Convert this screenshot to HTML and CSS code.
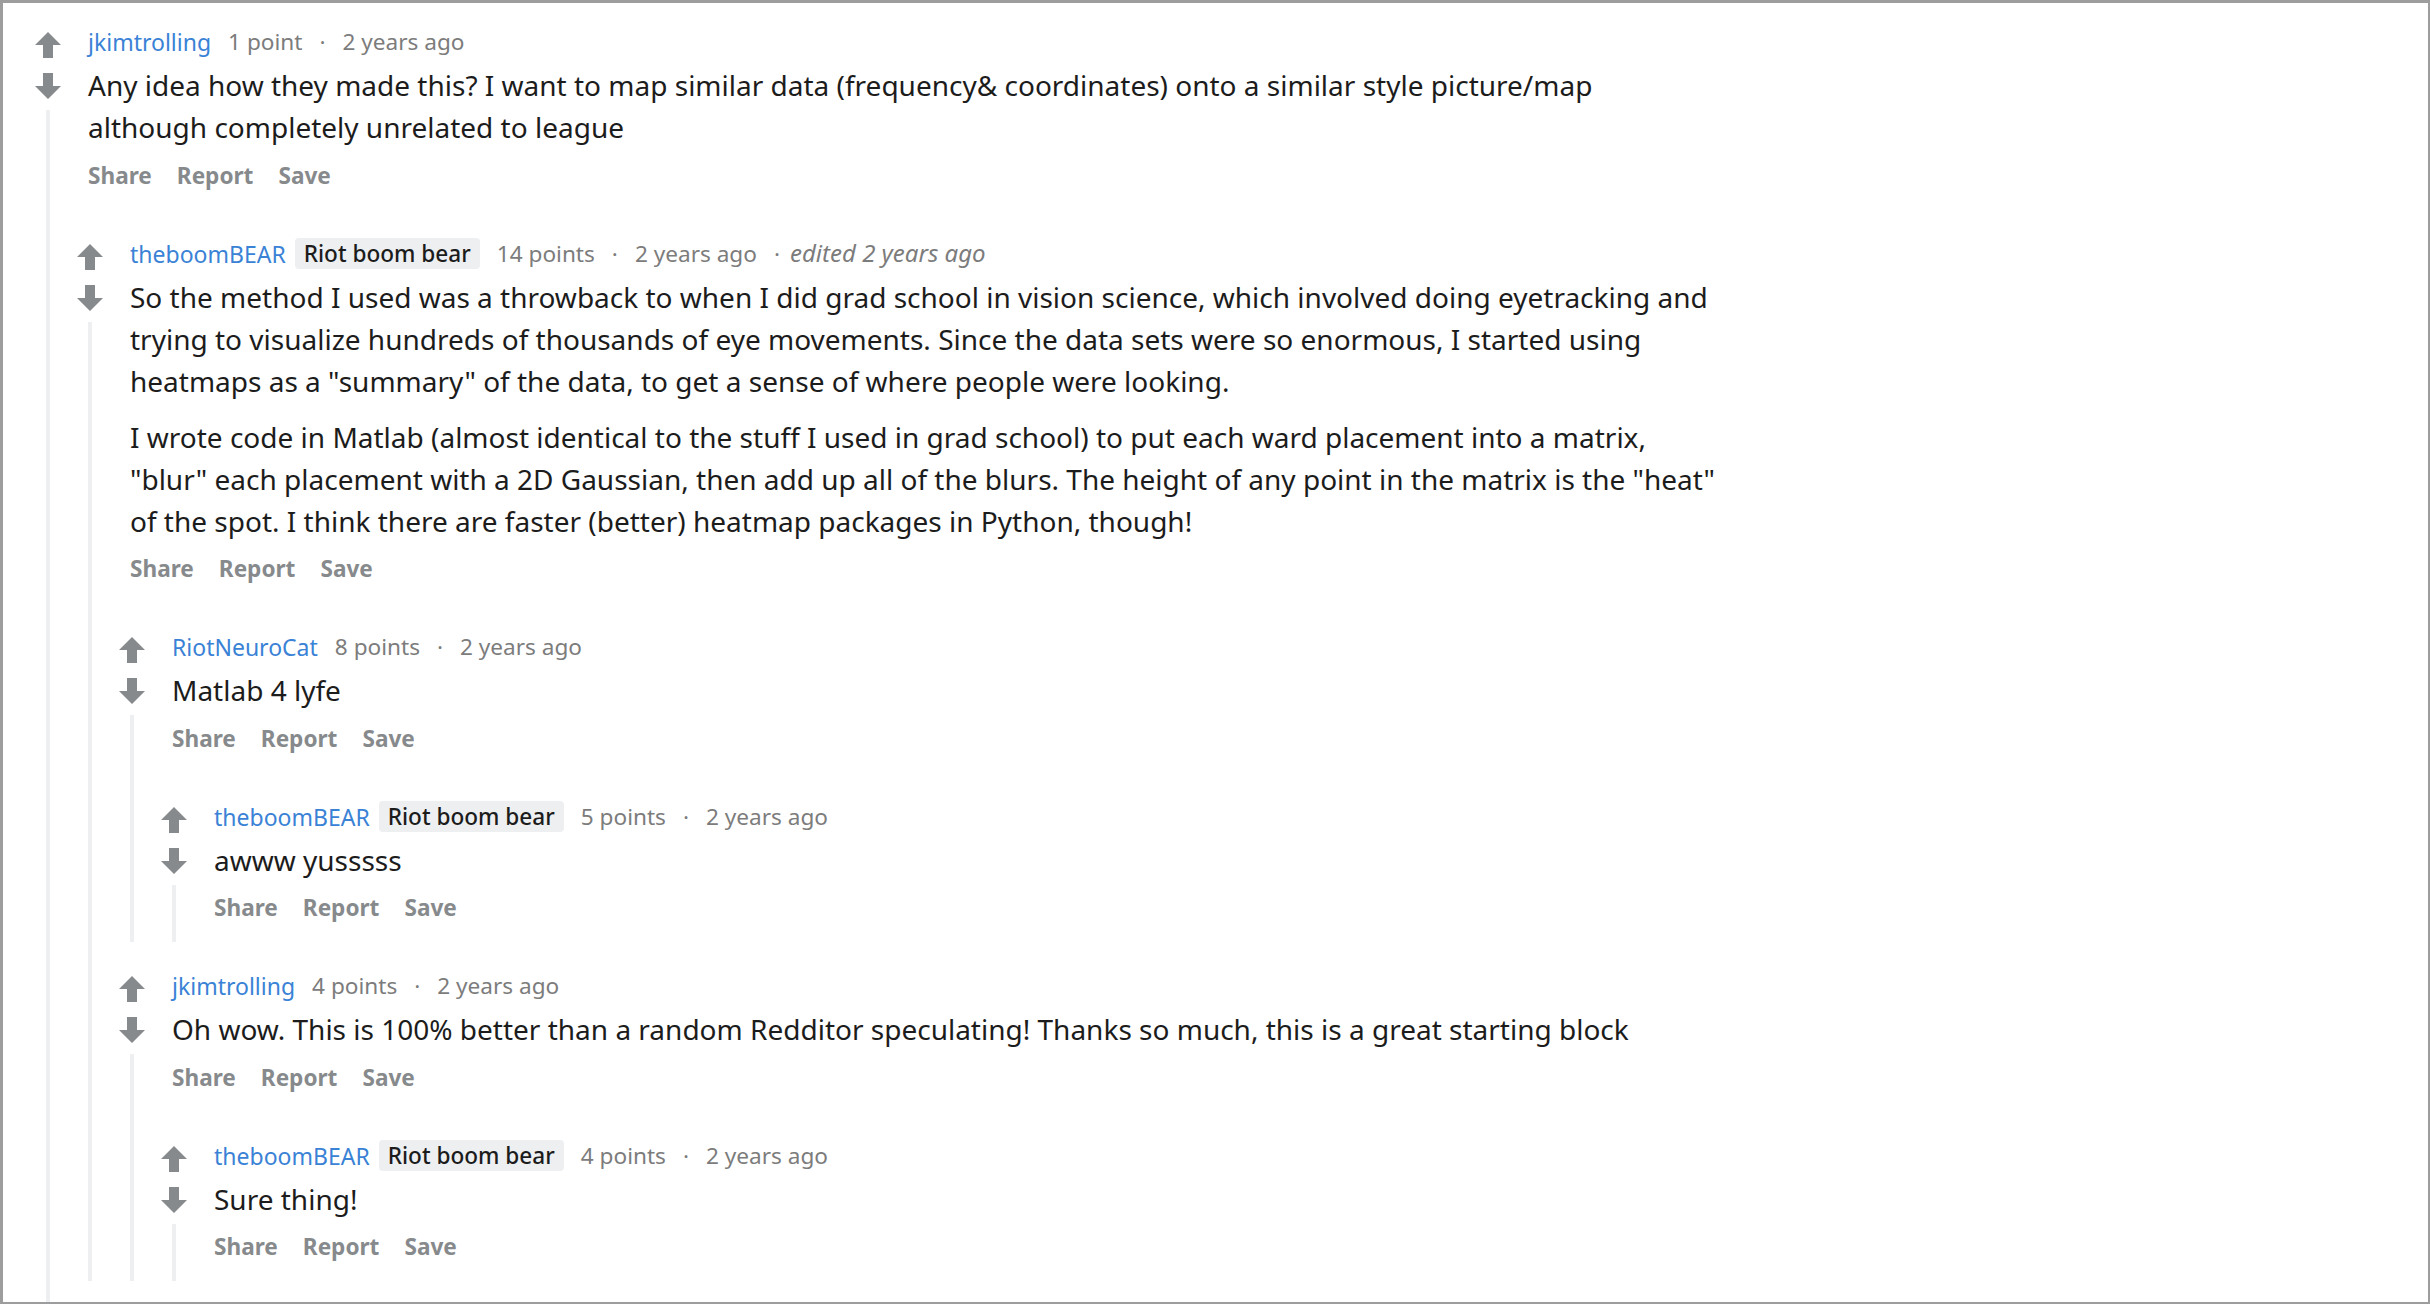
FILE: index.html
```html
<!DOCTYPE html>
<html lang="en">
<head>
<meta charset="utf-8">
<title>Comments</title>
<link rel="stylesheet" href="styles.css">
</head>
<body>
<div class="frame">
  <div class="thread">
    <div class="comment first more">
      <div class="rail">
        <svg class="vote" viewBox="0 0 26 26"><polygon points="13,0 26,13 18,13 18,26 8,26 8,13 0,13"/></svg>
        <svg class="vote down" viewBox="0 0 26 26"><polygon points="13,26 26,13 18,13 18,0 8,0 8,13 0,13"/></svg>
        <div class="line"></div>
      </div>
      <div class="main">
        <div class="head">
          <div class="meta"><a class="user">jkimtrolling</a><span class="score">1 point</span><span class="dot">·</span><span>2 years ago</span></div>
          <div class="body"><p>Any idea how they made this? I want to map similar data (frequency&amp; coordinates) onto a similar style picture/map although completely unrelated to league</p></div>
          <div class="actions"><span>Share</span><span>Report</span><span>Save</span></div>
        </div>
        <div class="children">
          <div class="comment more">
            <div class="rail">
              <svg class="vote" viewBox="0 0 26 26"><polygon points="13,0 26,13 18,13 18,26 8,26 8,13 0,13"/></svg>
              <svg class="vote down" viewBox="0 0 26 26"><polygon points="13,26 26,13 18,13 18,0 8,0 8,13 0,13"/></svg>
              <div class="line"></div>
            </div>
            <div class="main">
              <div class="head">
                <div class="meta"><a class="user">theboomBEAR</a><span class="flair">Riot boom bear</span><span class="score">14 points</span><span class="dot">·</span><span>2 years ago</span><span class="edited"><span class="edot">·</span>edited 2 years ago</span></div>
                <div class="body">
                  <p>So the method I used was a throwback to when I did grad school in vision science, which involved doing eyetracking and trying to visualize hundreds of thousands of eye movements. Since the data sets were so enormous, I started using heatmaps as a "summary" of the data, to get a sense of where people were looking.</p>
                  <p>I wrote code in Matlab (almost identical to the stuff I used in grad school) to put each ward placement into a matrix, "blur" each placement with a 2D Gaussian, then add up all of the blurs. The height of any point in the matrix is the "heat" of the spot. I think there are faster (better) heatmap packages in Python, though!</p>
                </div>
                <div class="actions"><span>Share</span><span>Report</span><span>Save</span></div>
              </div>
              <div class="children">
                <div class="comment">
                  <div class="rail">
                    <svg class="vote" viewBox="0 0 26 26"><polygon points="13,0 26,13 18,13 18,26 8,26 8,13 0,13"/></svg>
                    <svg class="vote down" viewBox="0 0 26 26"><polygon points="13,26 26,13 18,13 18,0 8,0 8,13 0,13"/></svg>
                    <div class="line"></div>
                  </div>
                  <div class="main">
                    <div class="head">
                      <div class="meta"><a class="user">RiotNeuroCat</a><span class="score">8 points</span><span class="dot">·</span><span>2 years ago</span></div>
                      <div class="body"><p>Matlab 4 lyfe</p></div>
                      <div class="actions"><span>Share</span><span>Report</span><span>Save</span></div>
                    </div>
                    <div class="children">
                      <div class="comment">
                        <div class="rail">
                          <svg class="vote" viewBox="0 0 26 26"><polygon points="13,0 26,13 18,13 18,26 8,26 8,13 0,13"/></svg>
                          <svg class="vote down" viewBox="0 0 26 26"><polygon points="13,26 26,13 18,13 18,0 8,0 8,13 0,13"/></svg>
                          <div class="line"></div>
                        </div>
                        <div class="main">
                          <div class="head">
                            <div class="meta"><a class="user">theboomBEAR</a><span class="flair">Riot boom bear</span><span class="score">5 points</span><span class="dot">·</span><span>2 years ago</span></div>
                            <div class="body"><p>awww yusssss</p></div>
                            <div class="actions"><span>Share</span><span>Report</span><span>Save</span></div>
                          </div>
                        </div>
                      </div>
                    </div>
                  </div>
                </div>
                <div class="comment">
                  <div class="rail">
                    <svg class="vote" viewBox="0 0 26 26"><polygon points="13,0 26,13 18,13 18,26 8,26 8,13 0,13"/></svg>
                    <svg class="vote down" viewBox="0 0 26 26"><polygon points="13,26 26,13 18,13 18,0 8,0 8,13 0,13"/></svg>
                    <div class="line"></div>
                  </div>
                  <div class="main">
                    <div class="head">
                      <div class="meta"><a class="user">jkimtrolling</a><span class="score">4 points</span><span class="dot">·</span><span>2 years ago</span></div>
                      <div class="body"><p>Oh wow. This is 100% better than a random Redditor speculating! Thanks so much, this is a great starting block</p></div>
                      <div class="actions"><span>Share</span><span>Report</span><span>Save</span></div>
                    </div>
                    <div class="children">
                      <div class="comment">
                        <div class="rail">
                          <svg class="vote" viewBox="0 0 26 26"><polygon points="13,0 26,13 18,13 18,26 8,26 8,13 0,13"/></svg>
                          <svg class="vote down" viewBox="0 0 26 26"><polygon points="13,26 26,13 18,13 18,0 8,0 8,13 0,13"/></svg>
                          <div class="line"></div>
                        </div>
                        <div class="main">
                          <div class="head">
                            <div class="meta"><a class="user">theboomBEAR</a><span class="flair">Riot boom bear</span><span class="score">4 points</span><span class="dot">·</span><span>2 years ago</span></div>
                            <div class="body"><p>Sure thing!</p></div>
                            <div class="actions"><span>Share</span><span>Report</span><span>Save</span></div>
                          </div>
                        </div>
                      </div>
                    </div>
                  </div>
                </div>
              </div>
            </div>
          </div>
        </div>
      </div>
    </div>
  </div>
</div>
</body>
</html>
```
FILE: styles.css
```css
html, body {
  margin: 0;
  padding: 0;
  background: #ffffff;
}

.frame {
  width: 2430px;
  height: 1304px;
  box-sizing: border-box;
  border-style: solid;
  border-color: #9d9d9d;
  border-width: 3px 2px 2px 3px;
  overflow: hidden;
  background: #ffffff;
  font-family: "Noto Sans", "Open Sans", "Liberation Sans", sans-serif;
}

.thread {
  padding-left: 24px;
}

.comment {
  display: flex;
  padding-top: 28.5px;
}

.comment.first {
  padding-top: 23px;
}

.comment.more {
  padding-bottom: 400px;
}

.rail {
  width: 42px;
  flex: 0 0 42px;
  display: flex;
  flex-direction: column;
  align-items: center;
  padding-top: 6px;
}

.vote {
  width: 26px;
  height: 26px;
  display: block;
  fill: #878a8c;
}

.vote.down {
  margin-top: 15px;
}

.line {
  width: 4px;
  flex: 1;
  margin-top: 11px;
  background: #edeff1;
}

.main {
  flex: 1;
  min-width: 0;
}

.head {
  padding-left: 19px;
}

.meta {
  display: flex;
  align-items: center;
  height: 32px;
  font-size: 22.6px;
  line-height: 32px;
  color: #7c7c7c;
  white-space: nowrap;
}

.user {
  color: #3a82d6;
  font-size: 23px;
}

.flair {
  margin-left: 9px;
  padding: 0 9px;
  line-height: 31px;
  height: 31px;
  border-radius: 4px;
  background: #edeff1;
  color: #1c1c1c;
  font-weight: 500;
}

.score {
  margin-left: 17px;
}

.dot {
  padding: 0 17px;
}

.edited {
  margin-left: 17px;
  font-style: italic;
  font-size: 24px;
}

.edot {
  font-style: normal;
  font-size: 22.6px;
  margin-right: 10px;
}

.body {
  margin-top: 6px;
  max-width: 1600px;
  font-size: 28px;
  line-height: 42px;
  color: #1c1c1c;
}

.body p {
  margin: 0;
}

.body p + p {
  margin-top: 14px;
}

.actions {
  display: flex;
  align-items: center;
  gap: 25px;
  height: 54px;
  margin-bottom: 7px;
  font-size: 22.6px;
  font-weight: 700;
  color: #878a8c;
}
```
